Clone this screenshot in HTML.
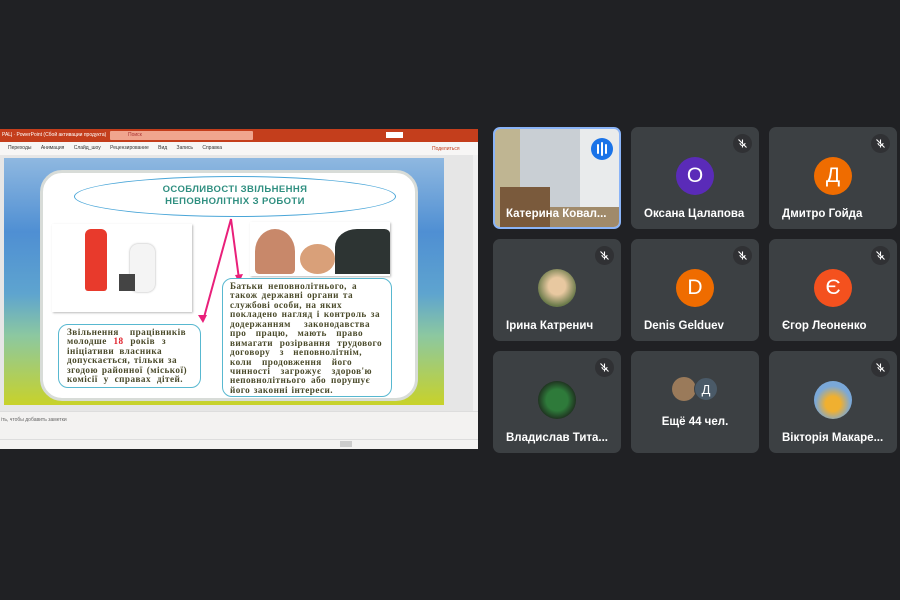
<!DOCTYPE html>
<html><head><meta charset="utf-8"><style>
*{margin:0;padding:0;box-sizing:border-box}
body{width:900px;height:600px;background:#202124;position:relative;overflow:hidden;font-family:"Liberation Sans",sans-serif}
.abs{position:absolute}
.tile{position:absolute;width:128px;height:102px;background:#3c4043;border-radius:7px;overflow:hidden}
.name{position:absolute;left:13px;bottom:9px;color:#fff;font-size:11.5px;font-weight:bold;white-space:nowrap}
.av{position:absolute;left:45px;top:30px;width:38px;height:38px;border-radius:50%;color:#fff;font-size:21px;text-align:center;line-height:38px}
.mic{position:absolute;right:7px;top:7px;width:19px;height:19px;border-radius:50%;background:#303134}
.mic svg{position:absolute;left:4px;top:4px}
.st{font-family:"Liberation Serif",serif;font-weight:bold;color:#4a4a2a;font-size:9.2px;position:absolute;letter-spacing:.45px}
.st div{height:9.45px;line-height:9.45px;text-align:justify;text-align-last:justify;overflow:visible;white-space:nowrap}
</style></head><body>
<div class="abs" style="left:0;top:129px;width:478px;height:320px;background:#f3f2f1">
 <div class="abs" style="left:0;top:0;width:478px;height:13px;background:#c43e1c"></div>
 <div class="abs" style="left:2px;top:3px;font-size:5px;color:#fff">PAЦ · PowerPoint (Сбой активации продукта)</div>
 <div class="abs" style="left:110px;top:2px;width:143px;height:9px;background:#f0a58e;border-radius:1px;font-size:5px;color:#a33;padding-left:18px;line-height:9px">Поиск</div>
 <div class="abs" style="left:386px;top:3px;width:17px;height:6px;background:#fff"></div>
 <div class="abs" style="left:0;top:13px;width:478px;height:13px;background:#f7f6f5;font-size:5px;color:#333;line-height:13px;white-space:nowrap;padding-left:8px;word-spacing:8px">Переходы Анимация Слайд_шоу Рецензирование Вид Запись Справка</div>
 <div class="abs" style="left:432px;top:17px;font-size:5px;color:#c43e1c">Поделиться</div>
 <div class="abs" style="left:0;top:26px;width:478px;height:256px;background:#e6e6e6"></div>
 <div class="abs" style="left:4px;top:29px;width:440px;height:247px;background:linear-gradient(180deg,#8fb8e0 0%,#4f8fd3 30%,#5ea4cf 55%,#8cc8a0 72%,#c8d22a 100%)"></div>
 <div class="abs" style="left:40px;top:41px;width:378px;height:231px;background:#fff;border-radius:22px;border:3px solid #d8dcd8"></div>
 <div class="abs" style="left:74px;top:47px;width:322px;height:41px;border:1px solid #4aa6d8;border-radius:50%;background:#fff"></div>
 <div class="abs" style="left:74px;top:55px;width:322px;text-align:center;color:#2f8f80;font-weight:bold;font-size:9.5px;line-height:12px;letter-spacing:.4px">ОСОБЛИВОСТІ ЗВІЛЬНЕННЯ<br>НЕПОВНОЛІТНІХ З РОБОТИ</div>
 <div class="abs" style="left:52px;top:95px;width:140px;height:88px;background:#fff;box-shadow:1px 1px 2px #bbb"></div>
 <div class="abs" style="left:85px;top:100px;width:22px;height:62px;background:#e83a2c;border-radius:6px 6px 3px 3px"></div>
 <div class="abs" style="left:130px;top:115px;width:25px;height:48px;background:#f4f4f4;border-radius:8px;box-shadow:0 0 2px #aaa"></div>
 <div class="abs" style="left:119px;top:145px;width:16px;height:17px;background:#444"></div>
 <div class="abs" style="left:250px;top:93px;width:140px;height:54px;background:#fff;box-shadow:1px 1px 2px #bbb"></div>
 <div class="abs" style="left:255px;top:100px;width:40px;height:45px;background:#c8886a;border-radius:50% 50% 10% 10%"></div>
 <div class="abs" style="left:300px;top:115px;width:35px;height:30px;background:#d9a079;border-radius:50%"></div>
 <div class="abs" style="left:335px;top:100px;width:55px;height:45px;background:#2d3433;border-radius:40% 10% 0 0"></div>
 <svg class="abs" style="left:195px;top:88px" width="50" height="110"><path d="M36 2 L8 104 M36 2 L44 62" stroke="#e9207a" stroke-width="2" fill="none"/><path d="M3 98 L8 106 L12 98Z M40 58 L44 66 L48 57Z" fill="#e9207a"/></svg>
 <div class="abs" style="left:58px;top:195px;width:143px;height:64px;border:1.5px solid #58b8d0;border-radius:10px;background:#fff"></div>
 <div class="st" style="left:67px;top:199px">
  <div style="width:119px">Звільнення працівників</div>
  <div style="width:99px">молодше <span style="color:#e0202a">18</span> років з</div>
  <div style="width:95px">ініціативи власника</div>
  <div style="width:110px">допускається, тільки за</div>
  <div style="width:120px">згодою районної (міської)</div>
  <div style="width:116px">комісії у справах дітей.</div>
 </div>
 <div class="abs" style="left:222px;top:149px;width:170px;height:119px;border:1.5px solid #58b8d0;border-radius:10px;background:#fff"></div>
 <div class="st" style="left:230px;top:153px">
  <div style="width:127px">Батьки неповнолітнього, а</div>
  <div style="width:123px">також державні органи та</div>
  <div style="width:112px">службові особи, на яких</div>
  <div style="width:150px">покладено нагляд і контроль за</div>
  <div style="width:140px">додержанням законодавства</div>
  <div style="width:133px">про працю, мають право</div>
  <div style="width:152px">вимагати розірвання трудового</div>
  <div style="width:132px">договору з неповнолітнім,</div>
  <div style="width:122px">коли продовження його</div>
  <div style="width:142px">чинності загрожує здоров'ю</div>
  <div style="width:140px">неповнолітнього або порушує</div>
  <div style="width:103px">його законні інтереси.</div>
 </div>
 <div class="abs" style="left:473px;top:26px;width:5px;height:256px;background:#f0f0f0"></div>
 <div class="abs" style="left:0;top:282px;width:478px;height:28px;background:#f3f2f1;border-top:1px solid #ddd"></div>
 <div class="abs" style="left:1px;top:288px;font-size:5px;color:#666">іть, чтобы добавить заметки</div>
 <div class="abs" style="left:0;top:310px;width:478px;height:10px;background:#f3f2f1;border-top:1px solid #ddd"></div>
 <div class="abs" style="left:340px;top:312px;width:12px;height:6px;background:#ccc"></div>
</div>
<div class="tile" style="left:493px;top:127px;background:#c9cfd4;border:2px solid #8ab4f8">
 <div class="abs" style="left:0;top:0;width:25px;height:100px;background:#bfb592"></div>
 <div class="abs" style="left:85px;top:0;width:40px;height:100px;background:#e9ebec"></div>
 <div class="abs" style="left:5px;top:58px;width:50px;height:42px;background:#7a5a3c"></div>
 <div class="abs" style="left:55px;top:78px;width:70px;height:22px;background:#a08a6a"></div>
 <div class="abs" style="left:96px;top:9px;width:22px;height:22px;border-radius:50%;background:#1a73e8"></div>
 <div class="abs" style="left:102px;top:15px;width:2px;height:10px;background:#fff;border-radius:1px"></div><div class="abs" style="left:106px;top:13px;width:2px;height:14px;background:#fff;border-radius:1px"></div><div class="abs" style="left:110px;top:15px;width:2px;height:10px;background:#fff;border-radius:1px"></div>
 <div class="name" style="left:11px;bottom:7px">Катерина Ковал...</div>
</div>
<div class="tile" style="left:631px;top:127px"><div class="mic"><svg width="11" height="11" viewBox="0 0 11 11"><path d="M5.5 1.5v5M3 5a2.5 2.5 0 005 0M5.5 7.5v2M1.5 1.5l8 8" stroke="#fff" stroke-width="1.1" fill="none"/></svg></div><div class="av" style="background:#5a2bb8">О</div><div class="name">Оксана Цалапова</div></div>
<div class="tile" style="left:769px;top:127px"><div class="mic"><svg width="11" height="11" viewBox="0 0 11 11"><path d="M5.5 1.5v5M3 5a2.5 2.5 0 005 0M5.5 7.5v2M1.5 1.5l8 8" stroke="#fff" stroke-width="1.1" fill="none"/></svg></div><div class="av" style="background:#ef6c00">Д</div><div class="name">Дмитро Гойда</div></div>
<div class="tile" style="left:493px;top:239px"><div class="mic"><svg width="11" height="11" viewBox="0 0 11 11"><path d="M5.5 1.5v5M3 5a2.5 2.5 0 005 0M5.5 7.5v2M1.5 1.5l8 8" stroke="#fff" stroke-width="1.1" fill="none"/></svg></div><div class="av" style="background:radial-gradient(circle at 50% 45%,#e8c8a0 30%,#6a7a4a 70%)"></div><div class="name">Ірина Катренич</div></div>
<div class="tile" style="left:631px;top:239px"><div class="mic"><svg width="11" height="11" viewBox="0 0 11 11"><path d="M5.5 1.5v5M3 5a2.5 2.5 0 005 0M5.5 7.5v2M1.5 1.5l8 8" stroke="#fff" stroke-width="1.1" fill="none"/></svg></div><div class="av" style="background:#ef6c00">D</div><div class="name">Denis Gelduev</div></div>
<div class="tile" style="left:769px;top:239px"><div class="mic"><svg width="11" height="11" viewBox="0 0 11 11"><path d="M5.5 1.5v5M3 5a2.5 2.5 0 005 0M5.5 7.5v2M1.5 1.5l8 8" stroke="#fff" stroke-width="1.1" fill="none"/></svg></div><div class="av" style="background:#f4511e">Є</div><div class="name">Єгор Леоненко</div></div>
<div class="tile" style="left:493px;top:351px"><div class="mic"><svg width="11" height="11" viewBox="0 0 11 11"><path d="M5.5 1.5v5M3 5a2.5 2.5 0 005 0M5.5 7.5v2M1.5 1.5l8 8" stroke="#fff" stroke-width="1.1" fill="none"/></svg></div><div class="av" style="background:radial-gradient(circle,#2e7a3a 40%,#1d2a1d 75%)"></div><div class="name">Владислав Тита...</div></div>
<div class="tile" style="left:631px;top:351px"><div class="abs" style="left:41px;top:26px;width:24px;height:24px;border-radius:50%;background:#9a7a5a"></div><div class="abs" style="left:63px;top:26px;width:24px;height:24px;border-radius:50%;background:#4a5a68;color:#fff;font-size:13px;text-align:center;line-height:24px;border:1.5px solid #3c4043">Д</div><div class="name" style="left:0;width:128px;text-align:center;bottom:25px">Ещё 44 чел.</div></div>
<div class="tile" style="left:769px;top:351px"><div class="mic"><svg width="11" height="11" viewBox="0 0 11 11"><path d="M5.5 1.5v5M3 5a2.5 2.5 0 005 0M5.5 7.5v2M1.5 1.5l8 8" stroke="#fff" stroke-width="1.1" fill="none"/></svg></div><div class="av" style="background:radial-gradient(circle at 50% 60%,#f0b030 25%,#7aa8d8 60%)"></div><div class="name">Вікторія Макаре...</div></div>
</body></html>
